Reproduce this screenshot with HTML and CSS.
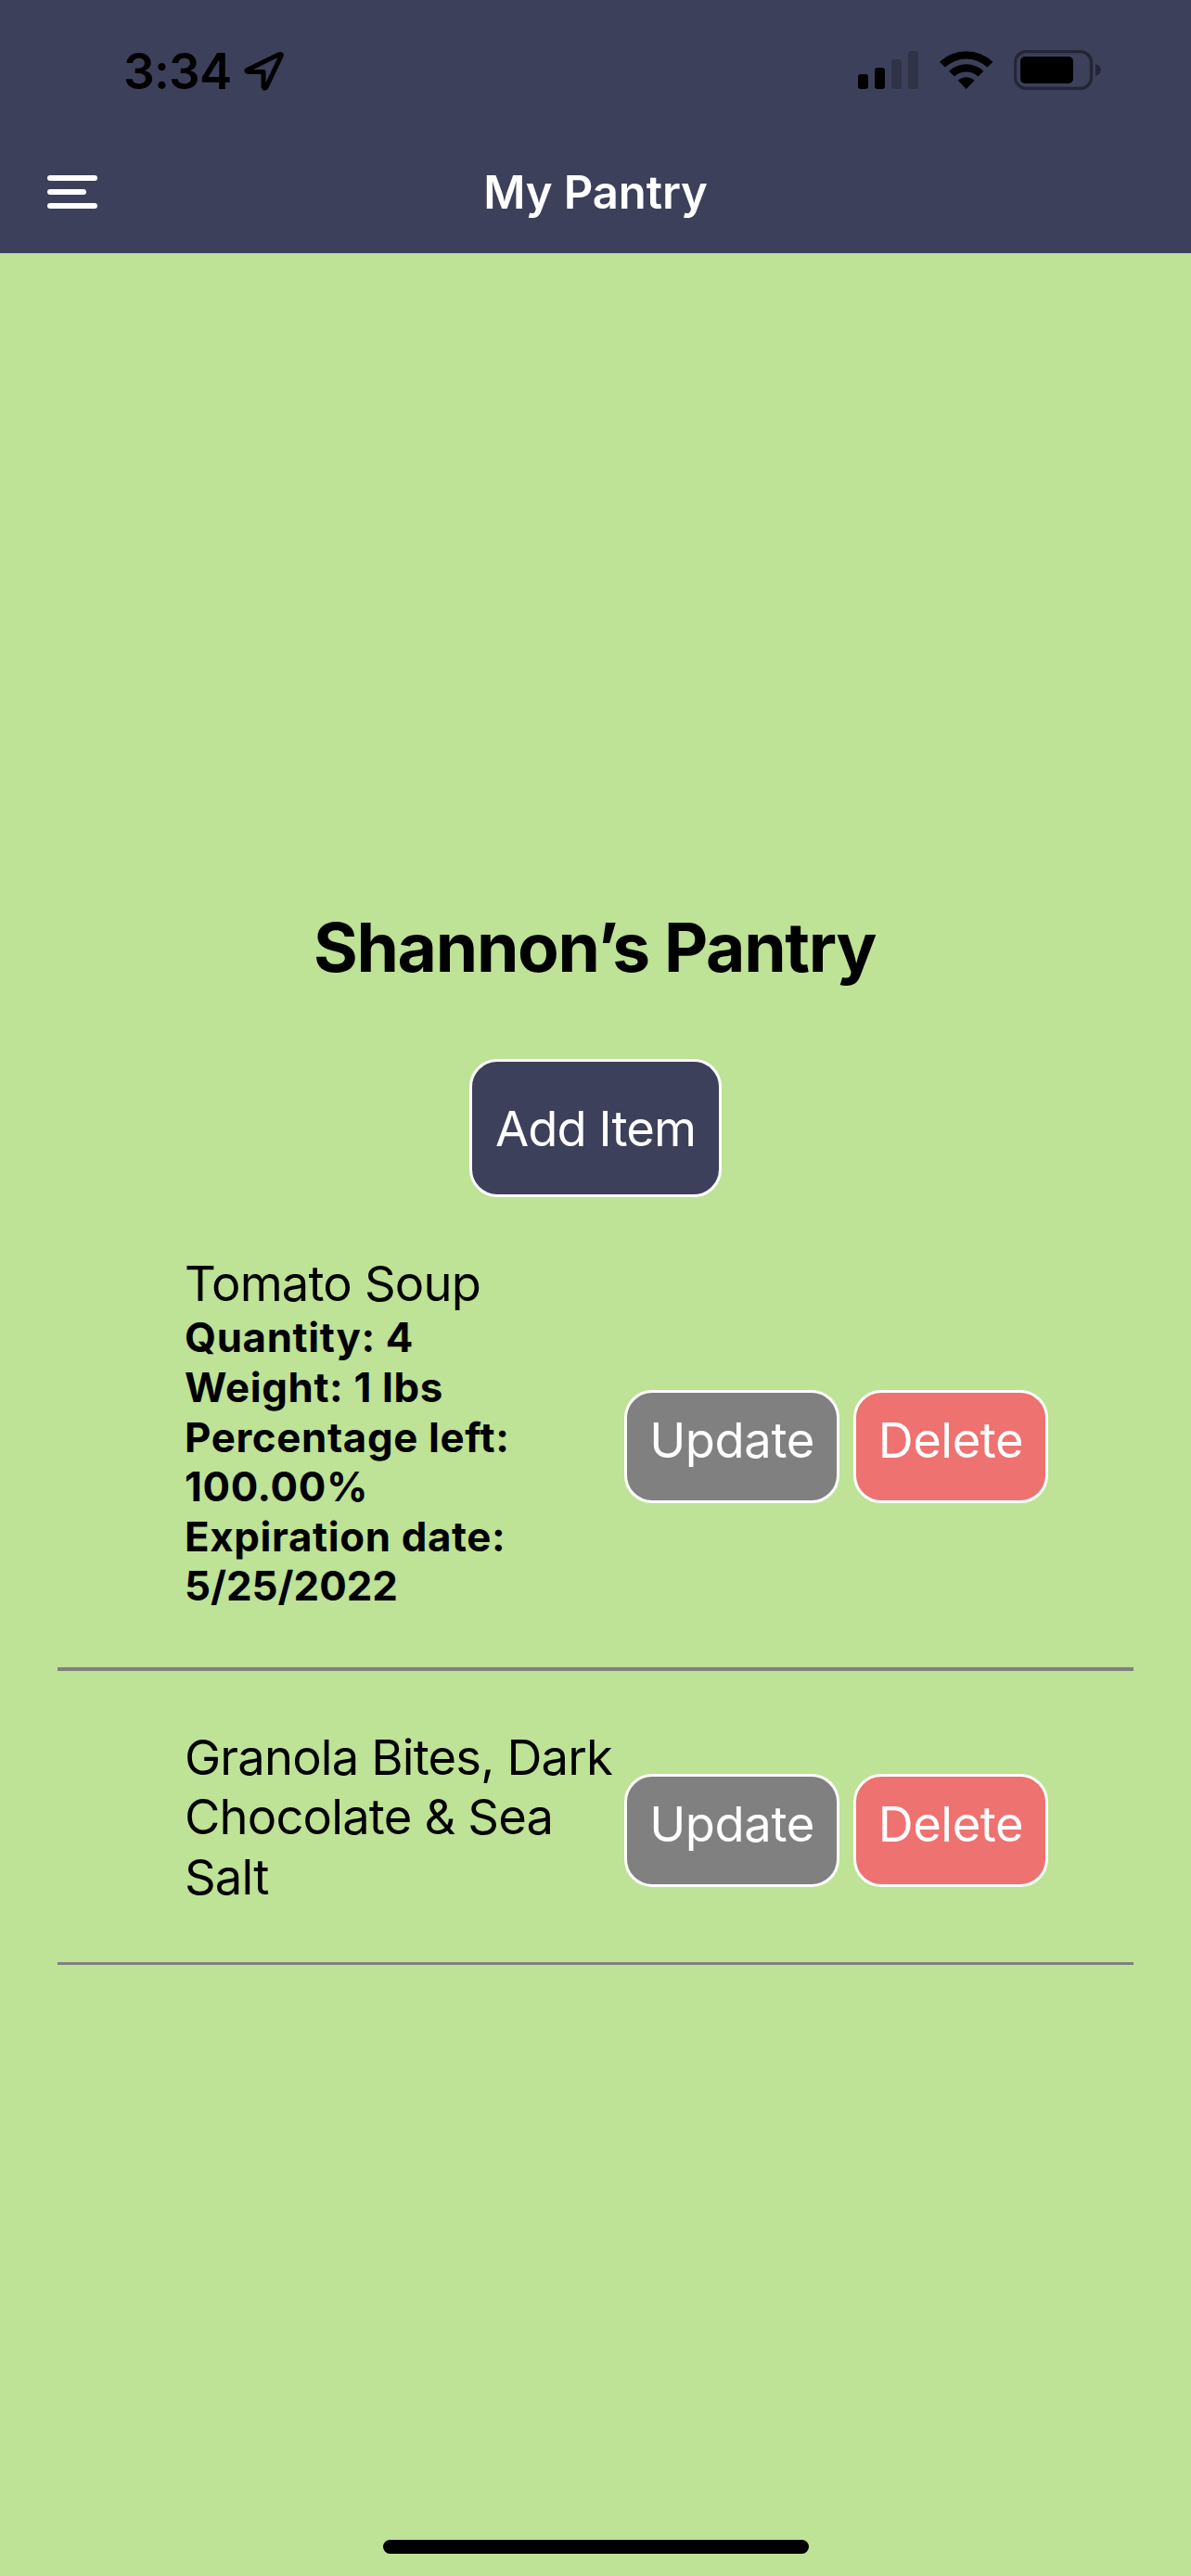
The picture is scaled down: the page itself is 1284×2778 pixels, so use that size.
FILE: index.html
```html
<!DOCTYPE html>
<html lang="en">
<head>
<meta charset="utf-8">
<title>My Pantry</title>
<link rel="stylesheet" href="styles.css">
</head>
<body>
<header class="header">
  <div class="status">
    <div class="status-left">
      <span class="clock">3:34</span>
      <svg class="location" width="44" height="44" viewBox="0 0 44 44"><path d="M3.8 20.2 38.2 3.6Q41 2.8 40 5.4L24.2 38.6Q22 41.4 21 38.4V22.6H4.4Q1.6 21.6 3.8 20.2Z" fill="none" stroke="#000" stroke-width="5" stroke-linejoin="round"/></svg>
    </div>
    <div class="status-right">
      <svg width="66" height="42" viewBox="0 0 66 42"><rect x="0" y="25" width="11" height="16" rx="3"/><rect x="18" y="18" width="11" height="23" rx="3"/><g opacity=".2"><rect x="36" y="9" width="11" height="32" rx="3"/><rect x="54" y="0" width="11" height="41" rx="3"/></g></svg>
      <svg class="wifi" width="58" height="42" viewBox="0 0 58 42"><path d="M0 12.8A41.5 41.5 0 0 1 57.4 12.8L51.4 18.6A33 33 0 0 0 6 18.6ZM10 22.8A27 27 0 0 1 47.4 22.8L41.4 28.6A18.5 18.5 0 0 0 16 28.6ZM19.8 32.8A13 13 0 0 1 37.6 32.8L28.7 42Z"/></svg>
      <svg class="battery" width="95" height="43" viewBox="0 0 95 43"><g opacity=".4"><rect x="1.5" y="1.5" width="82" height="40" rx="12" fill="none" stroke="#000" stroke-width="3.4"/><path d="M88 15Q94 17 94 21.5T88 28Z"/></g><rect x="7" y="7" width="57" height="29" rx="5"/></svg>
    </div>
  </div>
  <div class="nav">
    <svg class="menu" width="54" height="36" viewBox="0 0 54 36" fill="#fff"><rect width="54" height="6" rx="3"/><rect y="15" width="42" height="6" rx="3"/><rect y="30" width="54" height="6" rx="3"/></svg>
    <div class="nav-title">My Pantry</div>
  </div>
</header>
<main class="content">
  <h1 class="title">Shannon’s Pantry</h1>
  <div class="button add">Add Item</div>
  <ul class="list">
    <li class="row row-first">
      <div class="info">
        <div class="name">Tomato Soup</div>
        <div class="detail">Quantity: 4</div>
        <div class="detail">Weight: 1 lbs</div>
        <div class="detail">Percentage left: 100.00%</div>
        <div class="detail">Expiration date: <span class="date">5/25/2022</span></div>
      </div>
      <div class="actions">
        <div class="button update">Update</div>
        <div class="button delete">Delete</div>
      </div>
    </li>
    <li class="row">
      <div class="info">
        <div class="name">Granola Bites, Dark Chocolate &amp; Sea Salt</div>
      </div>
      <div class="actions">
        <div class="button update">Update</div>
        <div class="button delete">Delete</div>
      </div>
    </li>
  </ul>
</main>
<div class="home-indicator"></div>
</body>
</html>
```
FILE: styles.css
```css
* { box-sizing: border-box; }

body {
  margin: 0;
  width: 1284px;
  height: 2778px;
  display: flex;
  flex-direction: column;
  background: #bee296;
  color: #000;
  font-family: Inter, "Liberation Sans", sans-serif;
  overflow: hidden;
}

svg { display: block; flex: none; }

.header {
  height: 273px;
  background: #3d405b;
}

.status {
  height: 147px;
  display: flex;
  justify-content: space-between;
  padding: 0 96px 0 133px;
}

.status-left,
.status-right {
  display: flex;
  align-items: flex-start;
}

.clock {
  width: 130px;
  padding-top: 45px;
  font-size: 53px;
  font-weight: 600;
  letter-spacing: -0.8px;
  line-height: 64px;
  white-space: nowrap;
}

.location { margin-top: 55px; }
.status-right { padding-top: 54px; }
.status-right svg:first-child { margin-top: 1px; }
.wifi { margin-left: 22px; }
.battery { margin-left: 22px; }

.nav {
  height: 126px;
  display: grid;
  grid-template-columns: 1fr auto 1fr;
  align-items: center;
  padding: 0 51px;
}

.menu { margin-bottom: 6px; }

.nav-title {
  color: #fff;
  font-size: 49px;
  font-weight: 600;
  letter-spacing: -0.1px;
  line-height: 60px;
  margin-bottom: 5px;
}

.content {
  flex: 1;
  display: flex;
  flex-direction: column;
  align-items: center;
  padding: 706px 62px 0;
}

.title {
  margin: 0 2px 0 0;
  font-size: 73px;
  font-weight: 700;
  letter-spacing: -1.27px;
  line-height: 86px;
}

.button {
  border: 3px solid #fff;
  border-radius: 30px;
  color: #fff;
  font-size: 52.5px;
  letter-spacing: -0.4px;
  line-height: 64px;
  text-align: center;
  white-space: nowrap;
}

.add {
  width: 272px;
  height: 149px;
  margin-top: 77px;
  padding-top: 40px;
  background: #3d405b;
  letter-spacing: -0.9px;
}

.list {
  width: 1160px;
  margin: 0;
  padding: 0;
  list-style: none;
}

.row {
  display: flex;
  align-items: center;
  padding: 61px 92px 60px 137px;
  border-bottom: 3px solid #808080;
}

.row-first { border-bottom-width: 4px; }

.info { width: 474px; }

.name {
  font-size: 52.5px;
  letter-spacing: -0.82px;
  line-height: 64.4px;
}

.detail {
  font-size: 43.8px;
  font-weight: 700;
  letter-spacing: 0.65px;
  line-height: 53.6px;
}

.date { letter-spacing: 0; }

.actions {
  display: flex;
  gap: 15px;
  margin-top: 29.5px;
}

.actions .button {
  height: 122px;
  padding-top: 19px;
}

.update {
  width: 232px;
  background: #808080;
}

.delete {
  width: 210px;
  background: #ee7270;
}

.home-indicator {
  width: 459px;
  height: 15px;
  margin: 0 0 24px 413px;
  border-radius: 8px;
  background: #000;
}
```
